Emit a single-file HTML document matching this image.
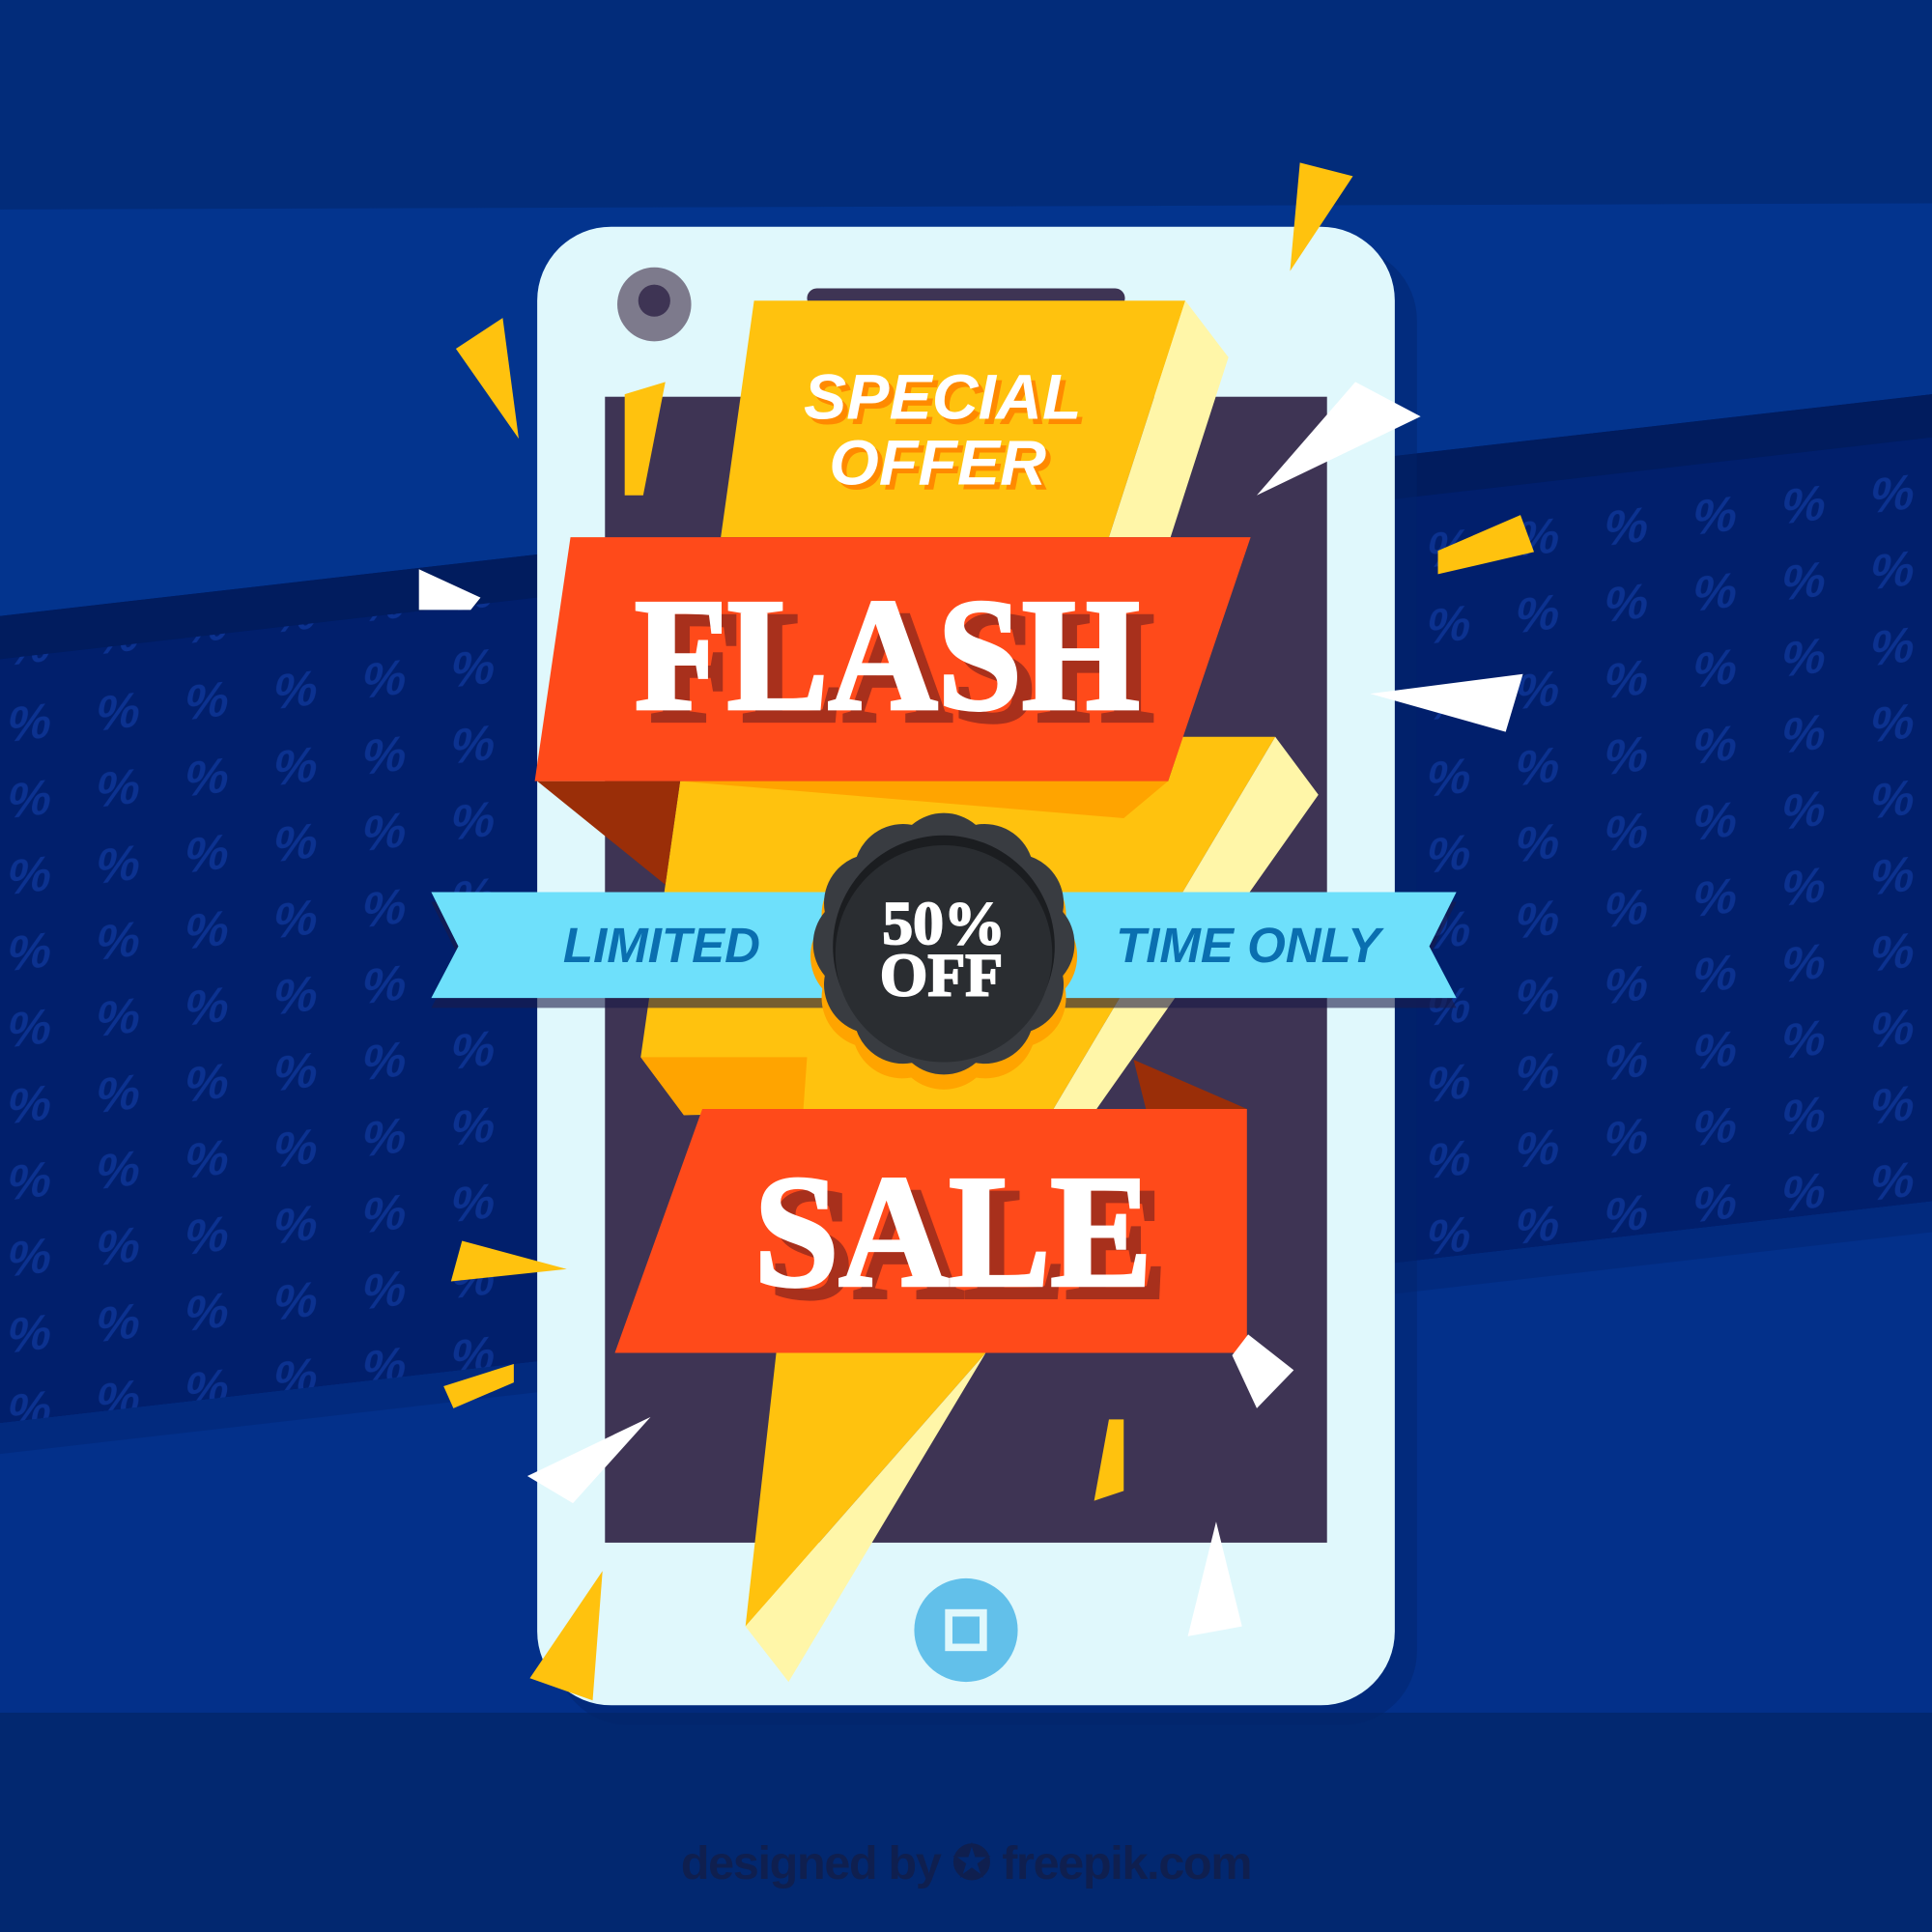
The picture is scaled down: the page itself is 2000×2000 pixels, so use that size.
<!DOCTYPE html>
<html><head><meta charset="utf-8"><style>html,body{margin:0;padding:0;width:2000px;height:2000px;overflow:hidden;background:#022c7a}svg{display:block}</style></head>
<body>
<svg width="2000" height="2000" viewBox="0 0 1568 1568" xmlns="http://www.w3.org/2000/svg">
<defs>
<pattern id="pc" width="72" height="62" patternUnits="userSpaceOnUse" patternTransform="skewY(-7)">
<text x="6" y="45" font-family="Liberation Sans, sans-serif" font-weight="bold" font-style="italic" font-size="40" fill="#0c3290">%</text>
</pattern>
<path id="sc" d="M96.6,-25.9 A40,40 0 0 1 96.6,25.9 A40,40 0 0 1 70.7,70.7 A40,40 0 0 1 25.9,96.6 A40,40 0 0 1 -25.9,96.6 A40,40 0 0 1 -70.7,70.7 A40,40 0 0 1 -96.6,25.9 A40,40 0 0 1 -96.6,-25.9 A40,40 0 0 1 -70.7,-70.7 A40,40 0 0 1 -25.9,-96.6 A40,40 0 0 1 25.9,-96.6 A40,40 0 0 1 70.7,-70.7 A40,40 0 0 1 96.6,-25.9 Z"/>
</defs>
<rect width="1568" height="1568" fill="#022c7a"/>
<polygon points="0,170 1568,165 1568,320 0,500" fill="#03348e"/>
<polygon points="0,500 1568,320 1568,975 0,1155" fill="#011f6c"/>
<polygon points="0,500 1568,320 1568,975 0,1155" fill="url(#pc)"/>
<polygon points="0,500 1568,320 1568,355 0,535" fill="#011c5e"/>
<polygon points="0,1155 1568,975 1568,1390 0,1390" fill="#03308a"/>
<polygon points="0,1155 1568,975 1568,1000 0,1180" fill="#022a7e"/>
<rect x="0" y="1390" width="1568" height="178" fill="#022870"/>

<!-- phone -->
<rect x="450" y="200" width="700" height="1200" rx="60" fill="#02236a" opacity="0.45"/>
<rect x="436" y="184" width="696" height="1200" rx="60" fill="#e0f8fc"/>
<rect x="491" y="322" width="586" height="930" fill="#3e3454"/>
<rect x="655" y="234" width="258" height="16" rx="8" fill="#3e3454"/>
<circle cx="531" cy="247" r="30" fill="#7d7a8c"/>
<circle cx="531" cy="244" r="13" fill="#3e3454"/>
<circle cx="784" cy="1323" r="42" fill="#62c0ea"/>
<rect x="770" y="1309" width="28" height="28" fill="none" stroke="#e0f8fc" stroke-width="6"/>

<!-- bolt -->
<polygon points="612,244 962,244 900,436 585,436" fill="#ffc20e"/>
<polygon points="962,244 997,290 950,436 900,436" fill="#fff6a8"/>
<polygon points="552,634 948,634 960,598 1035,598 855,900 555,905 520,858 540,718" fill="#ffc20e"/>
<polygon points="1035,598 1070,645 890,900 855,900" fill="#fff6a8"/>
<polygon points="520,858 655,858 652,900 555,905" fill="#ffa400"/>
<polygon points="552,634 948,634 912,664" fill="#ffa400"/>
<polygon points="630,1098 800,1098 605,1320" fill="#ffc20e"/>
<polygon points="800,1098 640,1365 605,1320" fill="#fff6a8"/>

<!-- flash banner -->
<polygon points="436,634 552,634 540,718" fill="#9a2e08"/>
<polygon points="463,436 1015,436 948,634 434,634" fill="#ff4a1a"/>
<text x="527" y="585" textLength="410" lengthAdjust="spacingAndGlyphs" font-family="Liberation Serif, serif" font-weight="bold" font-size="130" fill="#a8301c" stroke="#a8301c" stroke-width="3">FLASH</text>
<text x="515" y="575" textLength="410" lengthAdjust="spacingAndGlyphs" font-family="Liberation Serif, serif" font-weight="bold" font-size="130" fill="#fff" stroke="#fff" stroke-width="3">FLASH</text>
<text x="769" y="344" text-anchor="middle" font-family="Liberation Sans, sans-serif" font-weight="bold" font-style="italic" font-size="52" fill="#ff8a00">SPECIAL</text>
<text x="765" y="340" text-anchor="middle" font-family="Liberation Sans, sans-serif" font-weight="bold" font-style="italic" font-size="52" fill="#fff">SPECIAL</text>
<text x="765" y="397" text-anchor="middle" font-family="Liberation Sans, sans-serif" font-weight="bold" font-style="italic" font-size="52" fill="#ff8a00">OFFER</text>
<text x="761" y="393" text-anchor="middle" font-family="Liberation Sans, sans-serif" font-weight="bold" font-style="italic" font-size="52" fill="#fff">OFFER</text>

<!-- ribbon -->
<polygon points="350,732 1182,732 1160,776 1182,818 350,818 372,776" fill="#1a1a48" opacity="0.6"/>
<polygon points="350,724 1182,724 1160,768 1182,810 350,810 372,768" fill="#6ee0fb"/>
<text x="537" y="781" text-anchor="middle" font-family="Liberation Sans, sans-serif" font-weight="bold" font-style="italic" font-size="40" fill="#0a6fb0">LIMITED</text>
<text x="1013" y="781" text-anchor="middle" font-family="Liberation Sans, sans-serif" font-weight="bold" font-style="italic" font-size="40" fill="#0a6fb0">TIME ONLY</text>

<!-- badge -->
<use href="#sc" transform="translate(766,776) scale(1.02)" fill="#ffa400"/>
<use href="#sc" transform="translate(766,766)" fill="#393c41"/>
<circle cx="766" cy="768" r="90" fill="#1b1d20"/>
<circle cx="766" cy="774" r="88" fill="#2a2d31"/>
<text x="766" y="766" text-anchor="middle" font-family="Liberation Serif, serif" font-weight="bold" font-size="50" fill="#fff" stroke="#fff" stroke-width="1.5">50%</text>
<text x="764" y="808" text-anchor="middle" font-family="Liberation Serif, serif" font-weight="bold" font-size="50" fill="#fff" stroke="#fff" stroke-width="1.5">OFF</text>

<!-- sale banner -->
<polygon points="920,860 1012,900 930,900" fill="#9a2e08"/>
<polygon points="570,900 1012,900 1012,1098 499,1098" fill="#ff4a1a"/>
<text x="624" y="1053" textLength="323" lengthAdjust="spacingAndGlyphs" font-family="Liberation Serif, serif" font-weight="bold" font-size="130" fill="#a8301c" stroke="#a8301c" stroke-width="3">SALE</text>
<text x="612" y="1043" textLength="323" lengthAdjust="spacingAndGlyphs" font-family="Liberation Serif, serif" font-weight="bold" font-size="130" fill="#fff" stroke="#fff" stroke-width="3">SALE</text>

<!-- confetti -->
<g fill="#ffc20e">
<polygon points="1055,132 1098,143 1047,220"/>
<polygon points="370,283 408,258 421,356"/>
<polygon points="507,320 540,310 522,402 507,402"/>
<polygon points="1167,447 1234,418 1245,448 1167,466"/>
<polygon points="366,1040 375,1007 460,1030"/>
<polygon points="360,1125 417,1107 417,1122 368,1143"/>
<polygon points="888,1218 900,1152 912,1152 912,1210"/>
<polygon points="430,1362 489,1275 481,1380"/>
</g>
<g fill="#ffffff">
<polygon points="1100,310 1153,338 1020,402"/>
<polygon points="340,462 390,485 382,495 340,495"/>
<polygon points="1112,563 1236,547 1222,594"/>
<polygon points="1013,1083 1050,1112 1020,1143 1000,1100"/>
<polygon points="428,1198 528,1150 465,1220"/>
<polygon points="987,1235 1008,1320 964,1328"/>
</g>

<text x="784" y="1525" text-anchor="middle" font-family="Liberation Sans, sans-serif" font-weight="bold" font-size="38" fill="#0f1f4f" letter-spacing="-1">designed by ✪ freepik.com</text>
</svg>
</body></html>
